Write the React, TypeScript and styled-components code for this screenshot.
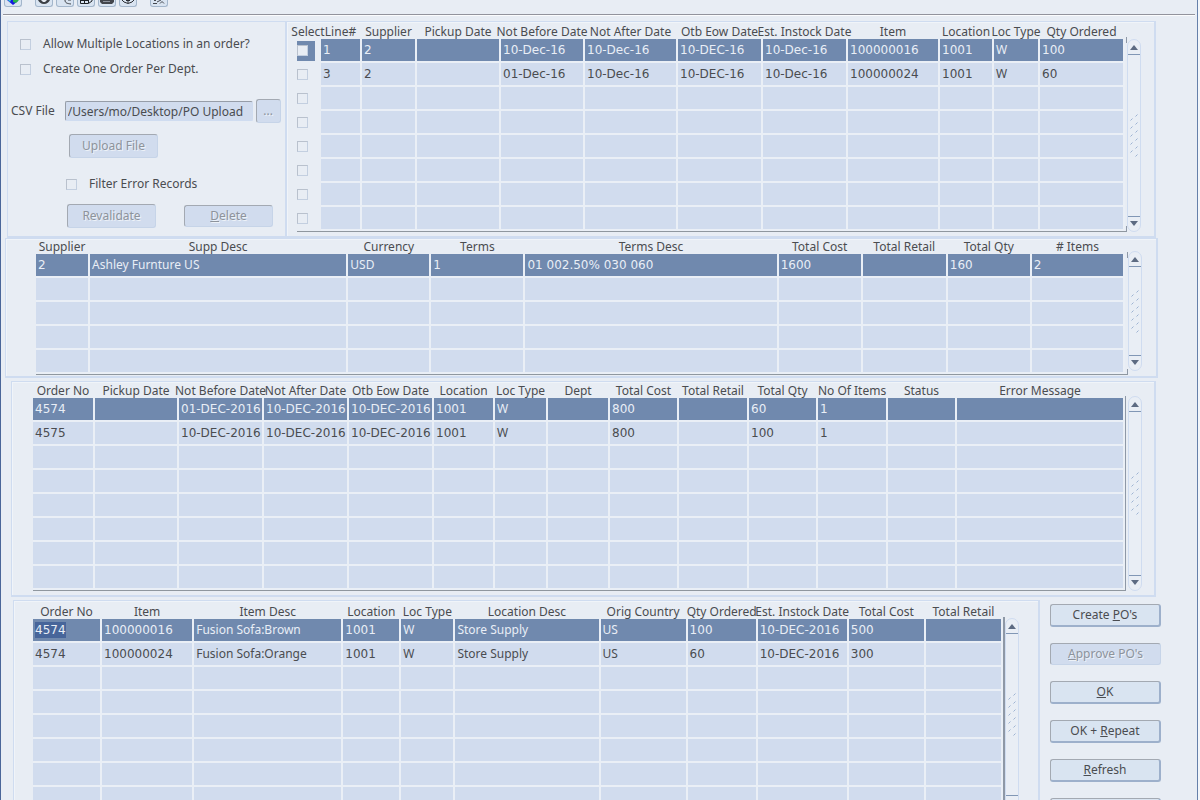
import React from "react";
import styled, { createGlobalStyle, css } from "styled-components";

const color = {
  page: "#e8edf4",
  frame: "#cfdcf0",
  cell: "#d1dcee",
  active: "#7089ae",
  activeText: "#e9eef6",
  gap: "#eaeff6",
  text: "#4a4c50",
  dim: "#8d939c",
  rule: "#8f979f",
  edge: "#4a6699",
  control: "#d9e4f1",
};

const GlobalStyle = createGlobalStyle`
  *, *::before, *::after { box-sizing: border-box; }
  body {
    margin: 0;
    background: ${color.page};
    color: ${color.text};
    font: 12px/16px "Noto Sans", "Open Sans", sans-serif;
  }
  button, input { font: inherit; color: inherit; }
`;

const Window = styled.main`
  height: 100vh;
  overflow: hidden;
  border-left: 1px solid ${color.edge};
  border-right: 2px solid #f2f6fa;
`;

const WindowBody = styled.div`
  min-height: 100%;
  border-right: 1px solid #6580aa;
`;

const Toolbar = styled.header`
  display: flex;
  align-items: flex-start;
  gap: 3px;
  height: 16px;
  margin: 0 2px 5px;
  padding-left: 1px;
  border-bottom: 1px solid #fbfcfd;
  box-shadow: inset 0 -1px 0 #92939c;
  overflow: hidden;
`;

const ToolButton = styled.button<{ $apart?: boolean }>`
  display: flex;
  justify-content: center;
  width: 18px;
  height: 7px;
  margin: 0 ${(p) => (p.$apart ? 10 : 0)}px 0 0;
  padding: 0;
  border: 1px solid #a3b6cb;
  border-top: 0;
  border-radius: 0 0 3px 3px;
  background: ${color.control};
  overflow: hidden;

  svg { display: block; }
`;

const Panel = styled.section<{ $left: number; $right: number; $top: number; $bottom?: number }>`
  display: flex;
  flex: 1;
  min-width: 0;
  padding: ${(p) => p.$top}px ${(p) => p.$right}px ${(p) => p.$bottom ?? 0}px ${(p) => p.$left}px;
  border: solid ${color.frame};
  border-width: 1px 2px 2px 1px;
  box-shadow: inset 1px 1px 0 #f0f4f9;
`;

const Band = styled.div<{ $left: number; $right: number; $after?: number }>`
  display: flex;
  margin: 0 ${(p) => p.$right}px ${(p) => p.$after ?? 0}px ${(p) => p.$left}px;
`;

const UploadPanel = styled.form`
  display: flex;
  flex: none;
  flex-direction: column;
  width: 279px;
  padding: 10px 3px 0;
  border: solid ${color.frame};
  border-width: 1px 1px 2px;
`;

const Line = styled.div<{ $before?: number; $indent?: number; $gap?: number }>`
  display: flex;
  align-items: center;
  gap: ${(p) => p.$gap ?? 0}px;
  min-height: 24px;
  margin-top: ${(p) => p.$before ?? 0}px;
  padding-left: ${(p) => p.$indent ?? 0}px;
`;

const CheckLabel = styled.label`
  display: flex;
  align-items: center;
  gap: 12px;
`;

const Check = styled.input.attrs({ type: "checkbox" })`
  appearance: none;
  display: block;
  flex: none;
  width: 11px;
  height: 11px;
  margin: 0;
  border: 1px solid #b9c1cd;
  border-right-color: #c3cfe0;
  border-bottom-color: #c3cfe0;
  background: ${color.page};
`;

const PathInput = styled.input`
  width: 188px;
  height: 20px;
  padding: 0 2px;
  border: 1px solid ${color.frame};
  border-top-color: #969da8;
  border-left-color: #969da8;
  border-radius: 2px;
  background: ${color.cell};
`;

const PushButton = styled.button<{ $width: number }>`
  width: ${(p) => p.$width}px;
  height: 23px;
  padding: 0 0 1px;
  border: 1px solid #a3a9b2;
  border-right: 2px solid #9db0cb;
  border-bottom: 2px solid #9db0cb;
  border-radius: 3px;
  background: ${color.control};
  line-height: 16px;
  white-space: nowrap;

  &:disabled {
    height: 22px;
    border-right: 1px solid #c6d4e8;
    border-bottom: 1px solid #c6d4e8;
    background: ${color.cell};
    color: ${color.dim};
    text-shadow: 1px 1px 0 #edf2f8;
  }
`;

const TallButton = styled(PushButton)`
  &:disabled { height: 24px; }
`;

const Well = styled.div<{ $pad: number }>`
  flex: 1;
  min-width: 0;
  padding-right: ${(p) => p.$pad}px;
  border-bottom: 1px solid ${color.rule};
`;

const DataTable = styled.table`
  width: 100%;
  table-layout: fixed;
  border-collapse: separate;
  border-spacing: 0;
`;

const HeadCell = styled.th`
  height: 15px;
  padding: 0 2px 0 0;
  font-weight: normal;
`;

const HeadText = styled.span`
  display: flex;
  justify-content: center;
  height: 15px;
  line-height: 16px;
  white-space: nowrap;
`;

const Cell = styled.td<{ $active: boolean; $numeric: boolean }>`
  height: 24px;
  padding: 0 0 0 2px;
  border-right: 2px solid ${color.gap};
  border-bottom: 2px solid ${color.gap};
  background: ${(p) => (p.$active ? color.active : color.cell)};
  color: ${(p) => (p.$active ? color.activeText : color.text)};
  line-height: 16px;
  white-space: nowrap;
  overflow: hidden;
  ${(p) => p.$numeric && css`font-family: "DejaVu Sans", sans-serif;`}
`;

const SelectCell = styled.td`
  height: 24px;
  padding: 0;
`;

const SelectMark = styled.span<{ $active: boolean }>`
  display: flex;
  align-items: center;
  width: 18px;
  height: 20px;
  padding: 0 0 2px;
  background: ${(p) => (p.$active ? color.active : "transparent")};
`;

const Marked = styled.span`
  display: inline-block;
  background: #47659a;
`;

const Rule = styled.div<{ $full?: boolean; $width: number }>`
  display: flex;
  flex: none;
  flex-direction: column;
  justify-content: space-between;
  width: ${(p) => p.$width}px;
  margin-top: 13px;
  ${(p) =>
    p.$full
      ? css`background: #8e98a6;`
      : css`
          &::before, &::after {
            content: "";
            height: 6px;
            background: #8e98a6;
          }
        `}
`;

const Track = styled.div<{ $gap: number; $top: number; $bottom: number }>`
  display: flex;
  flex: none;
  flex-direction: column;
  align-items: stretch;
  justify-content: space-between;
  width: 14px;
  margin: ${(p) => p.$top}px 0 ${(p) => p.$bottom}px ${(p) => p.$gap}px;
  border: 1px solid ${color.frame};
  border-radius: 7px;
  background: #e9eef5;
`;

const Arrow = styled.button<{ $down?: boolean }>`
  display: flex;
  justify-content: center;
  align-items: center;
  height: 15px;
  padding: ${(p) => (p.$down ? "0 0 1px" : "1px 0 0")};
  border: 0 solid #8197b5;
  border-width: ${(p) => (p.$down ? "1px 0 0" : "0 0 1px")};
  background: none;
`;

const Grip = styled.svg`
  display: block;
  align-self: center;
`;

const Actions = styled.nav`
  display: flex;
  flex: none;
  flex-direction: column;
  gap: 16px;
  padding: 4px 0 0 10px;
`;

interface ScrollbarProps {
  gap: number;
  top: number;
  bottom: number;
}

function Scrollbar({ gap, top, bottom }: ScrollbarProps) {
  return (
    <Track $gap={gap} $top={top} $bottom={bottom}>
      <Arrow type="button" aria-label="Scroll up">
        <svg width="8" height="5" viewBox="0 0 8 5"><path d="M0 5L4 0l4 5z" fill="#5d6b82" /></svg>
      </Arrow>
      <Grip width="8" height="43" viewBox="0 0 8 43" stroke="#9db3d2">
        {[0, 1, 2, 3, 4, 5].map((i) => (
          <path key={i} d={`M5.500 ${2.5 + i * 8}l2-2`} />
        ))}
        {[0, 1, 2, 3, 4].map((i) => (
          <path key={i} d={`M.5 ${6.5 + i * 8}l2-2`} />
        ))}
      </Grip>
      <Arrow type="button" $down aria-label="Scroll down">
        <svg width="8" height="5" viewBox="0 0 8 5"><path d="M0 0L4 5l4-5z" fill="#5d6b82" /></svg>
      </Arrow>
    </Track>
  );
}

const isNumeric = (value = "") => /^\d/.test(value);

type Column = [label: string, width: number];

interface GridProps {
  columns: Column[];
  rows: string[][];
  count: number;
  selectable?: boolean;
  marked?: boolean;
  pad: number;
  fullRule?: boolean;
  ruleWidth?: number;
  bar: ScrollbarProps;
}

function Grid({ columns, rows, count, selectable, marked, pad, fullRule, ruleWidth = 1, bar }: GridProps) {
  const lines = Array.from({ length: count }, (_, i) => rows[i] ?? []);
  const fields = selectable ? columns.slice(1) : columns;
  return (
    <>
      <Well $pad={pad}>
        <DataTable>
          <colgroup>
            {columns.map(([label, width]) => <col key={label} width={width} />)}
          </colgroup>
          <thead>
            <tr>
              {columns.map(([label]) => (
                <HeadCell key={label} scope="col"><HeadText>{label}</HeadText></HeadCell>
              ))}
            </tr>
          </thead>
          <tbody>
            {lines.map((line, r) => (
              <tr key={r}>
                {selectable && (
                  <SelectCell>
                    <SelectMark $active={r === 0}>
                      <Check aria-label={`Select line ${r + 1}`} />
                    </SelectMark>
                  </SelectCell>
                )}
                {fields.map(([label], c) => (
                  <Cell key={label} $active={r === 0} $numeric={isNumeric(line[c])}>
                    {marked && r === 0 && c === 0 ? <Marked>{line[c]}</Marked> : line[c]}
                  </Cell>
                ))}
              </tr>
            ))}
          </tbody>
        </DataTable>
      </Well>
      <Rule $full={fullRule} $width={ruleWidth} />
      <Scrollbar {...bar} />
    </>
  );
}

const lineColumns: Column[] = [
  ["Select", 24], ["Line#", 41], ["Supplier", 55], ["Pickup Date", 84], ["Not Before Date", 84],
  ["Not After Date", 93], ["Otb Eow Date", 85], ["Est. Instock Date", 85], ["Item", 92],
  ["Location", 54], ["Loc Type", 46], ["Qty Ordered", 85],
];
const lineRows = [
  ["1", "2", "", "10-Dec-16", "10-Dec-16", "10-DEC-16", "10-Dec-16", "100000016", "1001", "W", "100"],
  ["3", "2", "", "01-Dec-16", "10-Dec-16", "10-DEC-16", "10-Dec-16", "100000024", "1001", "W", "60"],
];

const supplierColumns: Column[] = [
  ["Supplier", 54], ["Supp Desc", 258], ["Currency", 83], ["Terms", 94], ["Terms Desc", 253],
  ["Total Cost", 84], ["Total Retail", 85], ["Total Qty", 84], ["# Items", 93],
];
const supplierRows = [
  ["2", "Ashley Furnture US", "USD", "1", "01 002.50% 030 060", "1600", "", "160", "2"],
];

const orderColumns: Column[] = [
  ["Order No", 62], ["Pickup Date", 84], ["Not Before Date", 85], ["Not After Date", 85],
  ["Otb Eow Date", 85], ["Location", 61], ["Loc Type", 53], ["Dept", 62], ["Total Cost", 69],
  ["Total Retail", 70], ["Total Qty", 69], ["No Of Items", 70], ["Status", 69], ["Error Message", 168],
];
const orderRows = [
  ["4574", "", "01-DEC-2016", "10-DEC-2016", "10-DEC-2016", "1001", "W", "", "800", "", "60", "1", "", ""],
  ["4575", "", "10-DEC-2016", "10-DEC-2016", "10-DEC-2016", "1001", "W", "", "800", "", "100", "1", "", ""],
];

const itemColumns: Column[] = [
  ["Order No", 69], ["Item", 92], ["Item Desc", 149], ["Location", 58], ["Loc Type", 54],
  ["Location Desc", 145], ["Orig Country", 87], ["Qty Ordered", 70], ["Est. Instock Date", 91],
  ["Total Cost", 77], ["Total Retail", 77],
];
const itemRows = [
  ["4574", "100000016", "Fusion Sofa:Brown", "1001", "W", "Store Supply", "US", "100", "10-DEC-2016", "500", ""],
  ["4574", "100000024", "Fusion Sofa:Orange", "1001", "W", "Store Supply", "US", "60", "10-DEC-2016", "300", ""],
];

export default function App() {
  return (
    <Window>
      <GlobalStyle />
      <WindowBody>
        <Toolbar>
          <ToolButton type="button" $apart aria-label="Home">
            <svg width="14" height="5" viewBox="0 0 14 5">
              <path d="M1 0h9l2 1-5 4z" fill="#1418e0" />
              <path d="M7 0h6l-3 3-3-1z" fill="#29b34a" />
              <path d="M2 0h3L4 2z" fill="#35d0d8" />
            </svg>
          </ToolButton>
          <ToolButton type="button" aria-label="Find">
            <svg width="14" height="5" viewBox="0 0 14 5">
              <path d="M1 0c1 2 3 4 6 4s5-2 6-4z" fill="#3c4046" />
              <path d="M4 0h6L8 2H6z" fill="#e4e9f0" />
            </svg>
          </ToolButton>
          <ToolButton type="button" aria-label="Search">
            <svg width="14" height="5" viewBox="0 0 14 5" fill="none" stroke="#3c4046">
              <path d="M7 0c0 3 2 3.500 6 4M10 0h3" />
            </svg>
          </ToolButton>
          <ToolButton type="button" aria-label="Copy">
            <svg width="14" height="5" viewBox="0 0 14 5" fill="none" stroke="#1d2024">
              <path d="M1.500 0v3.500h8L13 1V0M5.500 0v3M1 .5h9M9.500 0v3" />
            </svg>
          </ToolButton>
          <ToolButton type="button" aria-label="Print">
            <svg width="14" height="5" viewBox="0 0 14 5">
              <path d="M0 0h14v2l-2 2H2L0 2z" fill="#43464c" />
              <path d="M3 1.500h7" stroke="#8d939c" />
            </svg>
          </ToolButton>
          <ToolButton type="button" $apart aria-label="Help">
            <svg width="14" height="5" viewBox="0 0 14 5" fill="none" stroke="#2c2f35">
              <path d="M1 0l2 2 4 1.500L11 2l2-2M7 0v3M5 .5h4" />
            </svg>
          </ToolButton>
          <ToolButton type="button" aria-label="Exit">
            <svg width="14" height="5" viewBox="0 0 14 5" fill="none" stroke="#44484f">
              <path d="M1 3.500h4M5 2l4-2M8 3.500l2-2 2 2M2 .5h2" />
            </svg>
          </ToolButton>
        </Toolbar>

        <Band $left={6} $right={41}>
          <UploadPanel>
            <Line $indent={9}>
              <CheckLabel><Check />Allow Multiple Locations in an order?</CheckLabel>
            </Line>
            <Line $before={1} $indent={9}>
              <CheckLabel><Check />Create One Order Per Dept.</CheckLabel>
            </Line>
            <Line $before={18} $gap={3}>
              <Line as="label" $gap={10}>
                CSV File
                <PathInput defaultValue="/Users/mo/Desktop/PO Upload" />
              </Line>
              <TallButton type="button" $width={25} disabled>...</TallButton>
            </Line>
            <Line $before={11} $indent={58}>
              <TallButton type="button" $width={89} disabled>Upload File</TallButton>
            </Line>
            <Line $before={14} $indent={55}>
              <CheckLabel><Check />Filter Error Records</CheckLabel>
            </Line>
            <Line $before={8} $indent={56} $gap={28}>
              <TallButton type="button" $width={89} disabled>Revalidate</TallButton>
              <PushButton type="button" $width={89} disabled><u>D</u>elete</PushButton>
            </Line>
          </UploadPanel>
          <Panel $top={2} $right={13} $bottom={4} $left={10}>
            <Grid
              columns={lineColumns} rows={lineRows} count={8} selectable pad={1}
              bar={{ gap: 0, top: 15, bottom: 0 }}
            />
          </Panel>
        </Band>

        <Band $left={4} $right={39} $after={3}>
          <Panel $top={0} $right={14} $bottom={1} $left={30}>
            <Grid
              columns={supplierColumns} rows={supplierRows} count={5} pad={2}
              bar={{ gap: 0, top: 12, bottom: 4 }}
            />
          </Panel>
        </Band>

        <Band $left={10} $right={41} $after={3}>
          <Panel $top={1} $right={12} $bottom={4} $left={21}>
            <Grid
              columns={orderColumns} rows={orderRows} count={8} pad={0} fullRule
              bar={{ gap: 2, top: 13, bottom: 0 }}
            />
          </Panel>
        </Band>

        <Band $left={12} $right={36}>
          <Panel $top={3} $right={19} $bottom={4} $left={19}>
            <Grid
              columns={itemColumns} rows={itemRows} count={8} marked pad={0} fullRule ruleWidth={2}
              bar={{ gap: 0, top: 14, bottom: 4 }}
            />
          </Panel>
          <Actions>
            <PushButton type="button" $width={111}>Create <u>P</u>O's</PushButton>
            <PushButton type="button" $width={111} disabled><u>A</u>pprove PO's</PushButton>
            <PushButton type="button" $width={111}><u>O</u>K</PushButton>
            <PushButton type="button" $width={111}>OK + <u>R</u>epeat</PushButton>
            <PushButton type="button" $width={111}><u>R</u>efresh</PushButton>
            <PushButton type="button" $width={111} aria-label="Close" />
          </Actions>
        </Band>
      </WindowBody>
    </Window>
  );
}
